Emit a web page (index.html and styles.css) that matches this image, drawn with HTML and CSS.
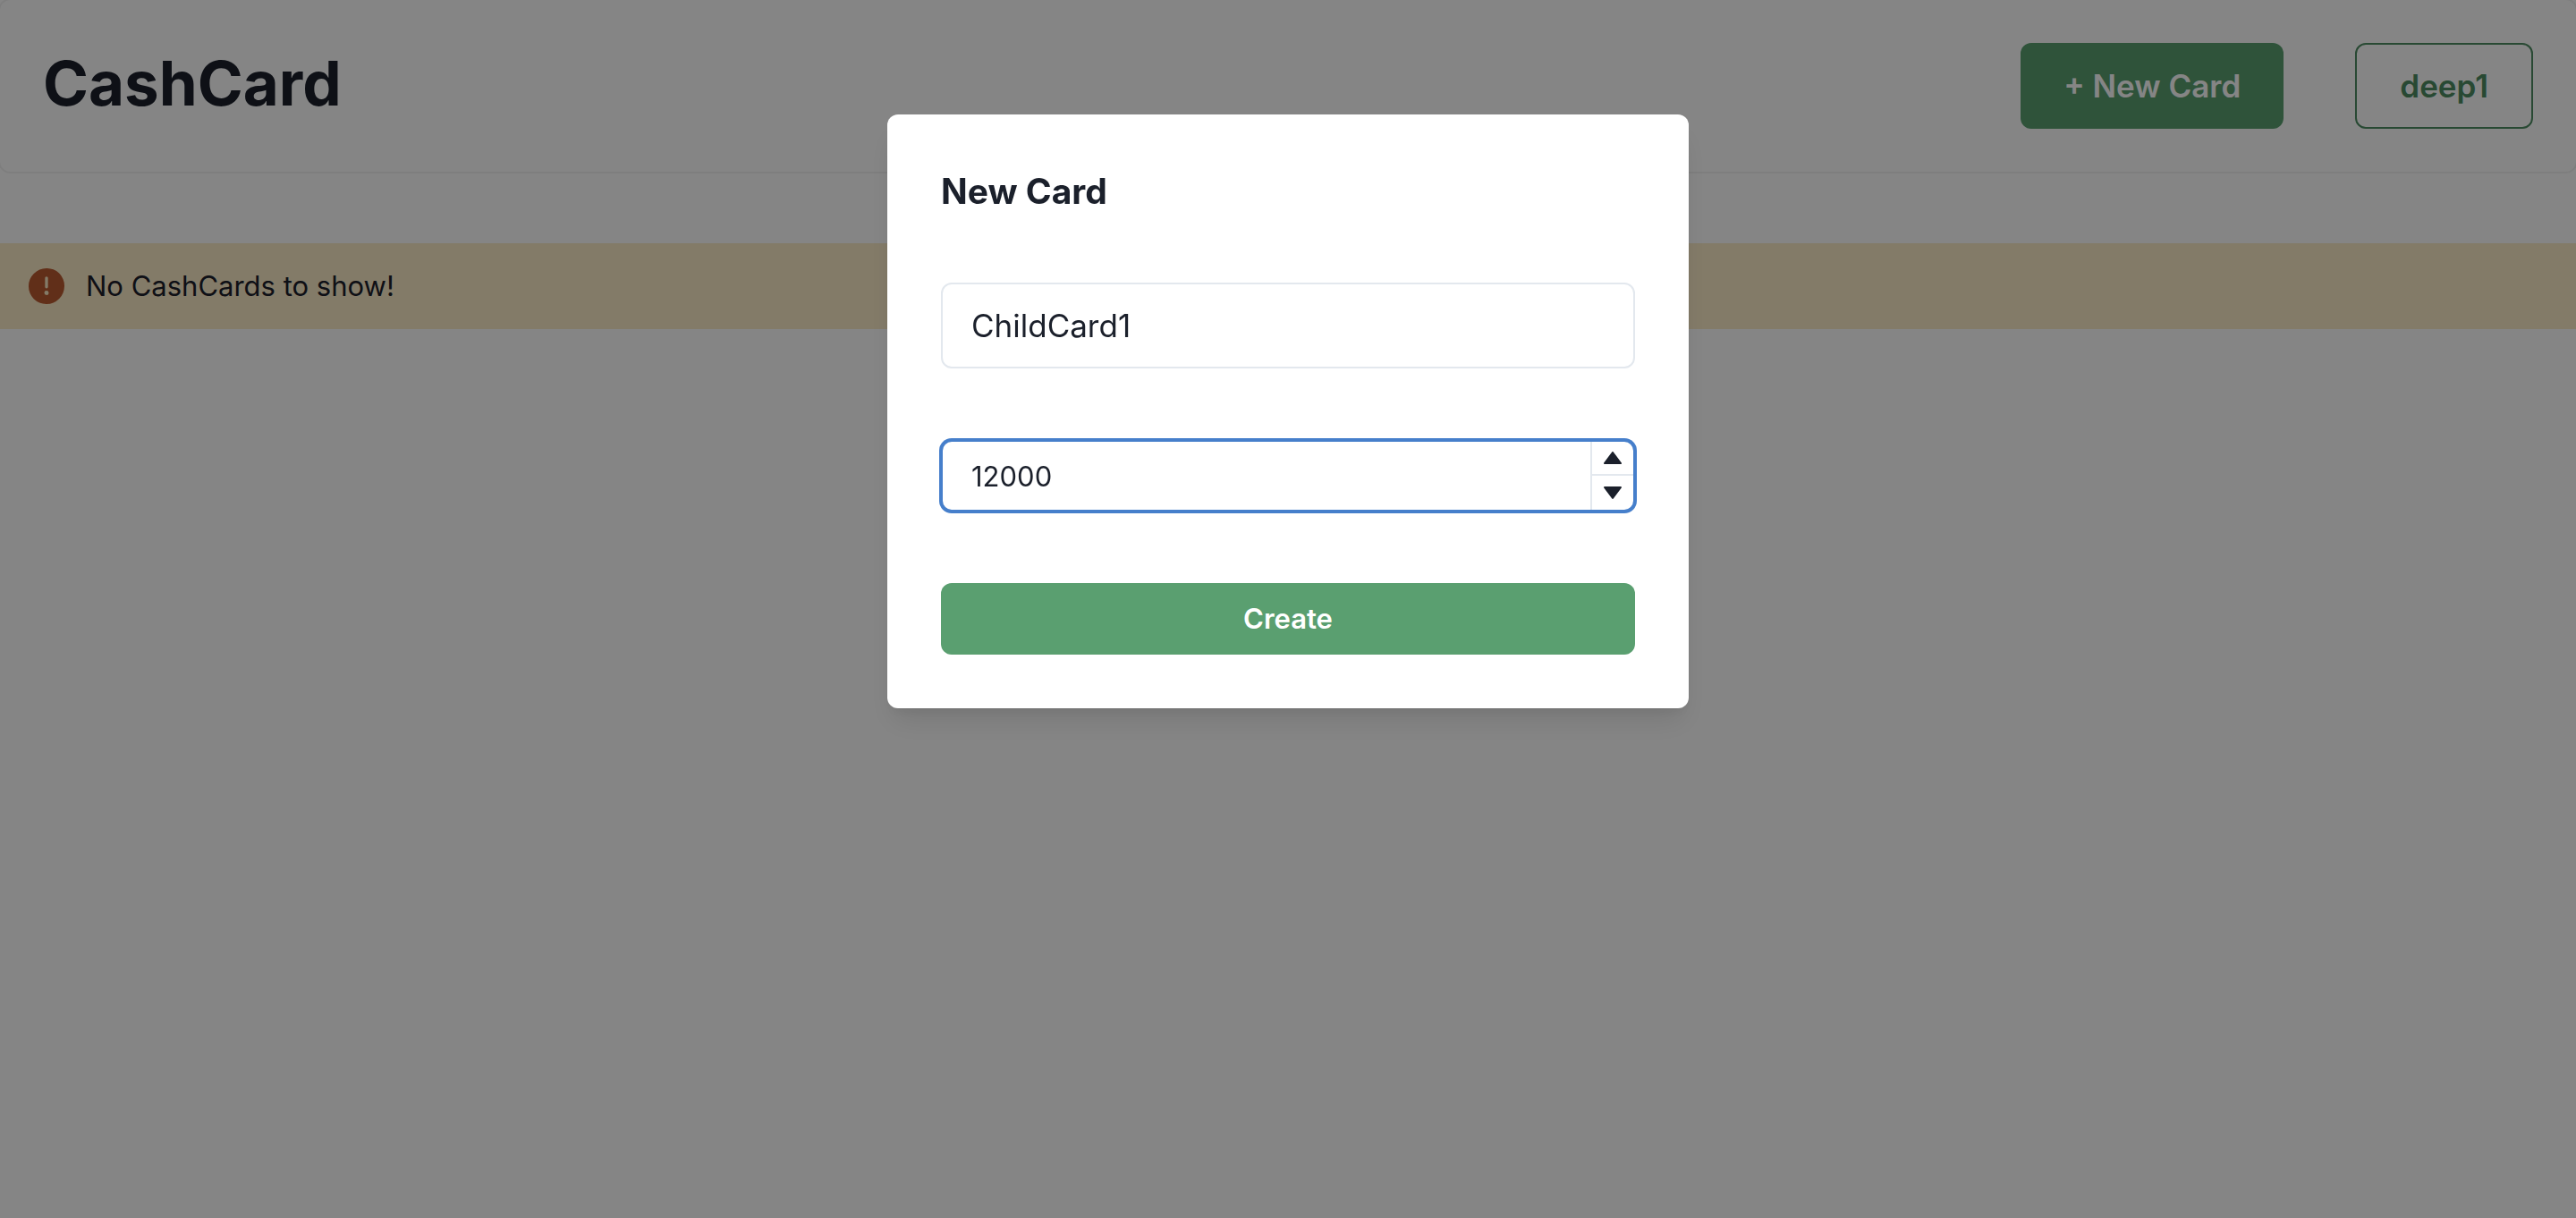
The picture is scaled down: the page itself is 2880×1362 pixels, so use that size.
FILE: index.html
```html
<!DOCTYPE html>
<html lang="en">
<head>
  <meta charset="utf-8">
  <meta name="viewport" content="width=device-width, initial-scale=1">
  <title>CashCard</title>
  <link rel="stylesheet" href="styles.css">
</head>
<body>
  <header class="topbar">
    <h1 class="brand">CashCard</h1>
    <div class="topbar-actions">
      <button class="button button-large button-solid" type="button">+ New Card</button>
      <button class="button button-large button-outline" type="button">deep1</button>
    </div>
  </header>

  <main class="content">
    <div class="alert" role="status">
      <svg class="alert-icon" viewBox="0 0 24 24" aria-hidden="true"><path fill="currentColor" d="M11.983,0a12.206,12.206,0,0,0-8.51,3.653A11.8,11.8,0,0,0,0,12.207,11.779,11.779,0,0,0,11.8,24h.214A12.111,12.111,0,0,0,24,11.791h0A11.766,11.766,0,0,0,11.983,0ZM10.5,16.542a1.476,1.476,0,0,1,1.449-1.53h.027a1.527,1.527,0,0,1,1.523,1.47,1.475,1.475,0,0,1-1.449,1.53h-.027A1.529,1.529,0,0,1,10.5,16.542ZM11,12.5v-6a1,1,0,0,1,2,0v6a1,1,0,1,1-2,0Z"/></svg>
      <span>No CashCards to show!</span>
    </div>
  </main>

  <div class="overlay">
    <section class="modal" role="dialog" aria-modal="true" aria-labelledby="modal-title">
      <h2 class="modal-title" id="modal-title">New Card</h2>
      <form class="modal-form">
        <input class="field field-large" type="text" aria-label="Card name" value="ChildCard1">
        <div class="number">
          <input class="field number-field" type="text" inputmode="decimal" role="spinbutton" aria-label="Amount" aria-valuenow="12000" value="12000">
          <div class="stepper">
            <button class="stepper-button" type="button" aria-label="Increase"><svg class="stepper-icon" viewBox="0 0 24 24" aria-hidden="true"><path fill="currentColor" d="M12.8,5.4c-0.377-0.504-1.223-0.504-1.6,0l-9,12c-0.228,0.303-0.264,0.708-0.096,1.047C2.275,18.786,2.621,19,3,19h18c0.379,0,0.725-0.214,0.895-0.553c0.169-0.339,0.133-0.744-0.096-1.047L12.8,5.4z"/></svg></button>
            <button class="stepper-button" type="button" aria-label="Decrease"><svg class="stepper-icon" viewBox="0 0 24 24" aria-hidden="true"><path fill="currentColor" d="M21,5H3C2.621,5,2.275,5.214,2.105,5.553C1.937,5.892,1.973,6.297,2.2,6.6l9,12c0.188,0.252,0.485,0.4,0.8,0.4s0.611-0.148,0.8-0.4l9-12c0.228-0.303,0.264-0.708,0.095-1.047C21.725,5.214,21.379,5,21,5z"/></svg></button>
          </div>
        </div>
        <button class="button button-solid" type="submit">Create</button>
      </form>
    </section>
  </div>
</body>
</html>
```
FILE: styles.css
```css
:root {
  --text: #1b202b;
  --green: #5a9f70;
  --green-dark: #4e8d62;
  --line: #e3e8ee;
  --focus: #467fcb;
}

*,
*::before,
*::after {
  box-sizing: border-box;
}

body {
  margin: 0;
  background: #fff;
  color: var(--text);
  font-family: Inter, "Liberation Sans", sans-serif;
  font-size: 31px;
  line-height: 48px;
}

button,
input {
  margin: 0;
  font: inherit;
  color: inherit;
}

.topbar {
  display: flex;
  align-items: flex-start;
  justify-content: space-between;
  padding: 48px;
  border-radius: 12px;
  box-shadow: 0 0 0 2px rgba(0, 0, 0, 0.05);
}

.brand {
  margin: 0;
  font-size: 69px;
  line-height: 90px;
  font-weight: 700;
}

.topbar-actions {
  display: flex;
  gap: 80px;
}

.button {
  height: 80px;
  padding: 0 32px;
  border: 0;
  border-radius: 12px;
  font-weight: 600;
}

.button-large {
  height: 96px;
  padding: 0 48px;
  font-size: 35px;
}

.button-solid {
  background: var(--green);
  color: #fff;
}

.button-outline {
  border: 2px solid var(--green-dark);
  background: transparent;
  color: var(--green-dark);
}

.content {
  padding-top: 80px;
}

.alert {
  display: flex;
  align-items: center;
  gap: 24px;
  padding: 24px 32px;
  background: #fbecc8;
}

.alert-icon {
  width: 40px;
  height: 40px;
  color: #bb5a30;
}

.overlay {
  position: fixed;
  inset: 0;
  display: flex;
  align-items: flex-start;
  justify-content: center;
  padding: 128px 32px;
  background: rgba(0, 0, 0, 0.48);
}

.modal {
  width: 100%;
  max-width: 896px;
  padding: 60px;
  border-radius: 12px;
  background: #fff;
  box-shadow: 0 20px 30px -6px rgba(0, 0, 0, 0.1), 0 8px 12px -4px rgba(0, 0, 0, 0.05);
}

.modal-title {
  margin: 0 0 76px;
  font-size: 39px;
  line-height: 52px;
  font-weight: 700;
}

.modal-form {
  display: flex;
  flex-direction: column;
  gap: 80px;
}

.field {
  width: 100%;
  height: 80px;
  padding: 0 32px;
  border: 2px solid var(--line);
  border-radius: 12px;
  background: #fff;
  outline: 0;
}

.field-large {
  height: 96px;
  font-size: 35px;
}

.number {
  position: relative;
}

.number-field {
  display: block;
  padding-right: 64px;
  border-color: var(--focus);
  box-shadow: 0 0 0 2px var(--focus);
}

.stepper {
  position: absolute;
  inset: 2px 2px 2px auto;
  display: flex;
  flex-direction: column;
  width: 48px;
}

.stepper-button {
  display: flex;
  height: 50%;
  align-items: center;
  justify-content: center;
  padding: 0;
  border: 0;
  border-left: 2px solid var(--line);
  background: transparent;
}

.stepper-button:first-child {
  border-bottom: 2px solid var(--line);
}

.stepper-icon {
  width: 24px;
  height: 24px;
}
```
